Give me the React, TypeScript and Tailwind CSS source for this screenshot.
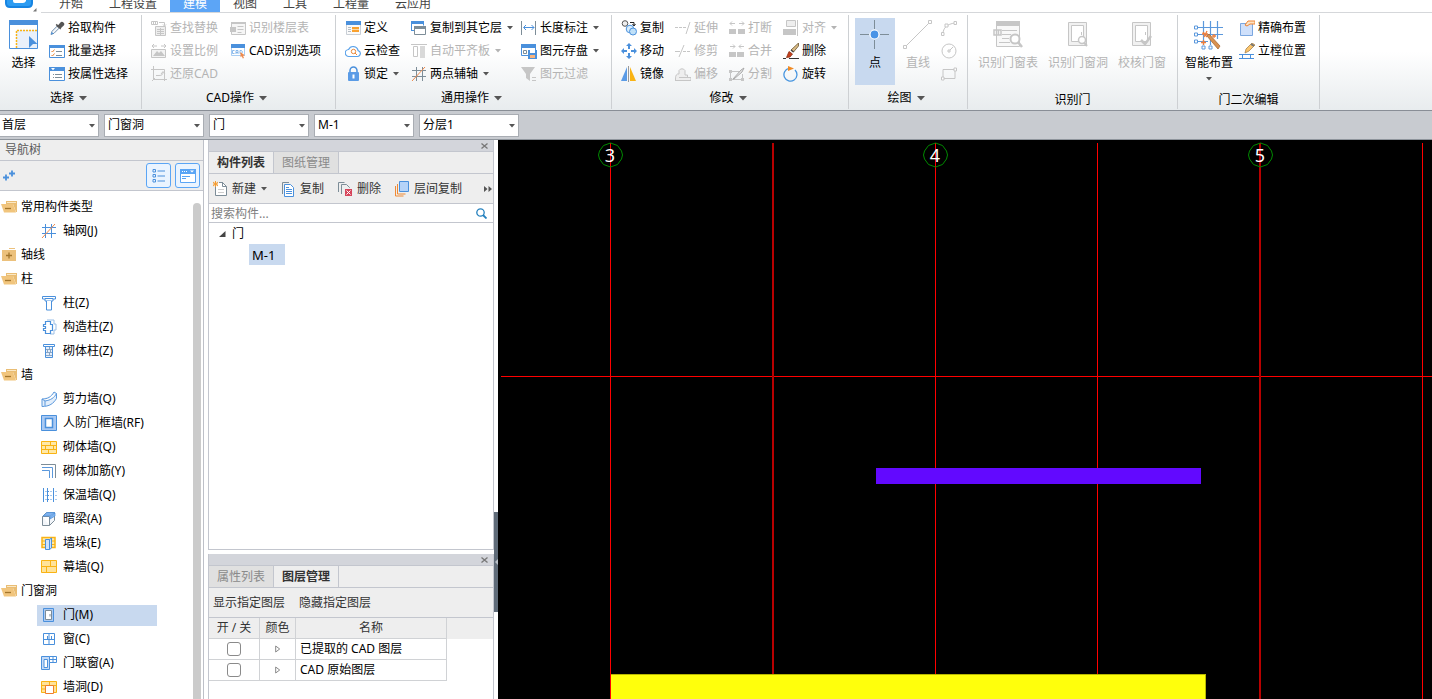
import type { ReactNode } from "react";
import clsx from "clsx";

const BLUE = "#4a90dc";
const SLATE = "#7d8d98";
const GRAY = "#c6c6c6";
const GOLD = "#f9b314";

const icons: Record<string, ReactNode> = {
  pick: (
    <>
      <path d="M2 14.5l1-3.2L8.6 5.7l2 2L5 13.3z" fill="#f4f6f8" stroke="#6f8fae" />
      <path d="M2 14.5l.8-2.6 1.8 1.7z" fill={BLUE} />
      <path d="M7.2 4.4l4.6 4.6M9 6.5l3-3.6c1-1.2 3.4.6 2.2 2.2L11 8z" fill="#555" stroke="#555" strokeWidth="1.5" />
    </>
  ),
  batch: (
    <>
      <path d="M.5 2.5h15v12H.5z" fill="#fff" stroke={BLUE} />
      <path d="M0 2h16v3H0z" fill={BLUE} />
      <path d="M2.5 8l1 1 2-2.500M2.5 12l1 1 2-2.500" fill="none" stroke="#e8873a" />
      <path d="M7 8.5h6M7 12.5h6" stroke={SLATE} />
    </>
  ),
  byAttr: (
    <>
      <path d="M.5 1.5h15v13H.5z" fill="#fff" stroke={BLUE} />
      <path d="M0 1h16v4H0z" fill={BLUE} />
      <path d="M2 2h4L4 4.2z" fill="#fff" />
      <path d="M4 8.5h1M4 11.5h1M6 8.5h7M6 11.5h7" stroke={SLATE} />
    </>
  ),
  findReplace: (
    <>
      <path d="M.5 1.5h6v3h-6zM2.5 2v2M4.5 2v2M8 2.5h5.5v3M12 4.5l1.5 1.5L15 4.5" fill="none" stroke={GRAY} />
      <path d="M4.5 6.5h10v9h-10z" fill="#eee" stroke={GRAY} />
      <path d="M6 9.5h7M6 11.5h7M6 13.5h7M9.5 8v7" stroke={GRAY} />
    </>
  ),
  scale: (
    <>
      <path d="M1 3h5M3 1L1 3l2 2M15 3h-5M13 1l2 2-2 2" fill="none" stroke={GRAY} />
      <path d="M.5 6.5h14v8H.5z" fill="#f3f3f3" stroke={GRAY} />
      <path d="M2 13l4-5 2 2 2-2 4 5z" fill={GRAY} />
    </>
  ),
  restore: (
    <path d="M2.5 0v13.5H16M0 3.5h13.5V15M1 15l3-3M5 9.5h3c3 0 4-1 4-3.5M10 8l2-2.5L14 8" fill="none" stroke={GRAY} />
  ),
  floorTable: (
    <>
      <path d="M1.5 2.5h14v12h-14z" fill="#f6f6f6" stroke={GRAY} />
      <path d="M1 2h15v2H1zM0 7h6v5H0z" fill={GRAY} />
      <path d="M7.5 6.5h6M7.5 9.5h6M7.5 12.5h4" stroke={GRAY} />
    </>
  ),
  cadOptions: (
    <>
      <path d="M1.5 2.5h13v10h-13z" fill="#fff" stroke="#a8cdf3" />
      <path d="M1 1h14v4H1z" fill={BLUE} />
      <path d="M4.5 7.5h-2v3h2M6 11V7.5h2V11M6 9.5h2M10 7.5h1.5l1 1.5-1 1.5H10z" fill="none" stroke="#6ea8e6" strokeWidth=".8" />
      <path d="M10.500 9l4.5 3.5-2 .3 1 2.2-1.2.5-1-2.2-1.3 1z" fill="#f08a4b" />
    </>
  ),
  define: (
    <>
      <path d="M1.5 1.5h14v13h-14z" fill="#fafafa" stroke="#c9cfd6" />
      <path d="M1 1h15v4H1z" fill={BLUE} />
      <path d="M3 7.5h3M3 9.5h3M3 11.5h3" stroke="#b5bcc3" />
      <path d="M7 7h7v5H7z" fill="#f9a12f" />
      <path d="M7 9.5h7" stroke="#fcd9a4" />
    </>
  ),
  cloudCheck: (
    <>
      <path d="M4 13.5h8.500a3 3 0 0 0 .6-5.900A5 5 0 0 0 3.600 6.500a3.500 3.500 0 0 0 .4 7z" fill="#fff" stroke="#5aa2ea" strokeWidth="1.2" />
      <circle cx="8.5" cy="8.5" r="2.2" fill="none" stroke="#e8873a" />
      <path d="M10 10l2 2" stroke="#e8873a" />
    </>
  ),
  lock: (
    <>
      <path d="M5 7V4.500a3.500 3.500 0 0 1 7 0V7" fill="none" stroke={BLUE} strokeWidth="1.5" />
      <rect x="3" y="6" width="11" height="9" rx="1" fill="#5a9be6" />
      <path d="M8.5 8.500v4" stroke="#fff" strokeWidth="2" />
    </>
  ),
  copyFloor: (
    <>
      <path d="M.5 10.5v-9h12v4" fill="#fff" stroke={BLUE} />
      <path d="M0 1h13v3H0zM0 10h3v1H0z" fill={BLUE} />
      <path d="M3.5 6.5h11v8h-11z" fill="#fff" stroke={SLATE} />
      <path d="M3 6h12v3H3z" fill={SLATE} />
    </>
  ),
  alignSlab: (
    <>
      <path d="M0 1.5h16" stroke={GRAY} />
      <path d="M2.5 3.5h4v10h-4z" fill="#fff" stroke={GRAY} />
      <path d="M9 3h5v12H9z" fill="#d9d9d9" />
    </>
  ),
  twoPoint: (
    <>
      <path d="M5.5 1v14M11.5 1v14M1 4.5h14M1 10.5h14" stroke={SLATE} />
      <path d="M1 15L14 1" stroke="#f08a4b" />
    </>
  ),
  dimension: (
    <>
      <path d="M.5 1v14M14.5 1v14" stroke={SLATE} />
      <path d="M3 7.5h10M5 5L2.5 7.5 5 10M10.5 5L13 7.5 10.5 10" fill="none" stroke={BLUE} />
    </>
  ),
  saveElement: (
    <>
      <path d="M.5 1.5h14v11H.5z" fill="#fff" stroke={BLUE} />
      <path d="M0 1h15v4H0z" fill={BLUE} />
      <path d="M2.5 7.5h3v3h-3z" fill="none" stroke={SLATE} />
      <path d="M7 7h9v9H7z" fill={BLUE} />
      <path d="M9 7h5v3H9z" fill="#fff" />
      <path d="M9 12h5v3H9z" fill="#f7b37d" />
    </>
  ),
  filter: (
    <>
      <path d="M0 1h14L9 8v7l-4-3V8z" fill={GRAY} />
      <path d="M11 11.5h4M11 14.5h4" stroke={GRAY} />
    </>
  ),
  copy: (
    <>
      <circle cx="4" cy="3.5" r="2.8" fill="#eee" stroke="#555" />
      <circle cx="9" cy="9" r="3.8" fill="#d8edfb" stroke={BLUE} />
      <circle cx="12" cy="11.5" r="3.5" fill="#bfe0f8" stroke={BLUE} />
      <path d="M9 2.5h4v3M11.5 4L13 6l1.5-2" fill="none" stroke="#222" />
    </>
  ),
  move: (
    <path
      d="M8 0l3 3H9v3H7V3H5zM8 16l3-3H9v-3H7v3H5zM0 8l3-3v2h3v2H3v2zM16 8l-3-3v2h-3v2h3v2z"
      fill={BLUE}
    />
  ),
  mirror: (
    <>
      <path d="M0 15h6V1z" fill="#5a9be6" />
      <path d="M7.5 0v16" stroke="#999" />
      <path d="M15 15H9V1z" fill={GOLD} />
    </>
  ),
  extend: <path d="M0 7.5h3M4 7.5h3M8 7.5h3M11 14L15 2" fill="none" stroke={GRAY} />,
  trim: <path d="M0 8.5h5M4 14L9 2M8 8.5h3M12 8.5h3" fill="none" stroke={GRAY} />,
  offset: (
    <>
      <path d="M0 14.5h16v-3h-3.500V9H10V4.500a3.500 3.500 0 0 0-6 0V8H2.500c-2 1-2 3-2 6z" fill="#eee" stroke={GRAY} />
      <path d="M4 11.5h9" stroke={GRAY} />
    </>
  ),
  breakIcon: (
    <>
      <path d="M0 9h7v5H0zM9 9h7v5H9z" fill={GRAY} />
      <path d="M1 3.5h5M3 1.5l-2 2 2 2M15 3.5h-5M13 1.5l2 2-2 2" fill="none" stroke={GRAY} />
    </>
  ),
  merge: (
    <>
      <path d="M0 9h7v5H0zM8 9h7v5H8z" fill={GRAY} />
      <path d="M1 3.5h5M4 1.5l2 2-2 2M15 3.5h-5M12 1.5l-2 2 2 2" fill="none" stroke={GRAY} />
    </>
  ),
  split: (
    <>
      <path d="M10 5.5H1.5v8h12V8" fill="none" stroke={GRAY} />
      <path d="M0 4h3v3H0zM0 12h3v3H0zM12 12h3v3h-3z" fill={GRAY} />
      <path d="M4 13l8-9 3-2-2 4-8 7z" fill="#e5e5e5" stroke="#aaa" />
    </>
  ),
  align: (
    <>
      <path d="M3.5.5h9v6h-9z" fill="#eee" stroke={GRAY} />
      <path d="M0 9h13v6H0z" fill={GRAY} />
      <path d="M14.5 0v16" stroke={GRAY} />
    </>
  ),
  erase: (
    <>
      <path d="M15.5 0v3l-5 6-2.500-2z" fill="#d9bb85" stroke="#6b5430" strokeWidth=".8" />
      <path d="M8 7l2.500 2" stroke="#444" strokeWidth="1.500" />
      <path d="M6 8.500l3.500 2.500-2.500 3-3.500.500z" fill="#c7401c" stroke="#8a3015" strokeWidth=".8" />
      <path d="M0 15.5h3M6 15.5h10" stroke="#333" />
    </>
  ),
  rotate: (
    <>
      <path d="M6 2.300A6.500 6.500 0 1 0 12 4" fill="none" stroke="#4795df" strokeWidth="1.3" />
      <path d="M5 0l6 2.5L5 5z" fill="#f08a24" />
    </>
  ),
  precise: (
    <>
      <path d="M1.5 3.5h12v12h-12z" fill="#cfe0fb" stroke="#7ba7e0" />
      <path d="M6 5l3-4h7v3h-5l-3 2z" fill="#fde3c4" stroke="#ee8434" />
    </>
  ),
  frame: (
    <>
      <path d="M6 10l1-4 6-6 3 2-6 6z" fill="#fbc56d" stroke="#a8844d" strokeWidth=".8" />
      <path d="M12 1l3 2" stroke="#777" strokeWidth="2" />
      <path d="M0 11.5h15M0 15.5h15M3.5 11v5M11.5 11v5" stroke={BLUE} />
    </>
  ),
  newItem: (
    <>
      <path d="M2.5 6v8.5h11v-9l-4-4H6" fill="#fff" stroke={SLATE} />
      <path d="M9.5 1v4.5h4" fill="none" stroke={SLATE} />
      <path d="M5 8.5h6M5 11.5h6" stroke="#ccc" />
      <path d="M0 1l5 4M5 1L0 5M2.5 0v6M0 3h5" stroke="#f59b2d" />
    </>
  ),
  copyDoc: (
    <>
      <path d="M1.5 13V1.5H8" fill="none" stroke={SLATE} />
      <path d="M3.5 3.5h6l3 3v9h-9z" fill="#fff" stroke={BLUE} />
      <path d="M5 8.5h6M5 10.5h6M5 12.5h6M5 6.5h3" stroke={BLUE} />
    </>
  ),
  deleteDoc: (
    <>
      <path d="M.5 11V1.5h6M3.5 13V3.5h5l3 3V7" fill="none" stroke={SLATE} />
      <path d="M7 8h7v7H7z" fill="#d6455b" />
      <path d="M8.5 9.5l4 4M12.5 9.5l-4 4" stroke="#fff" />
    </>
  ),
  layerCopy: (
    <>
      <path d="M.5 5v10h8M2.5 3v10h8" fill="none" stroke="#ef8a35" />
      <path d="M4.5.5h9v10h-9z" fill="#b5d3f8" stroke={BLUE} />
    </>
  ),
  folderOpen: (
    <>
      <path d="M5 2h11v11h-1l-3-8H5z" fill="#e9bd74" />
      <path d="M6 3.5h9" stroke="#fbe8c4" />
      <path d="M0 5h12l3 8.500H3z" fill="#f1c57d" />
      <path d="M4 9.500h6" stroke="#a3762c" strokeWidth="1.3" />
    </>
  ),
  folderClosed: (
    <>
      <path d="M8 1h6v1H8zM1 3h14v11H1z" fill="#ecc17c" />
      <path d="M5 8.500h6M8 5.500v6" stroke="#a3762c" strokeWidth="1.3" />
    </>
  ),
  grid: (
    <>
      <path d="M4.5 1v14M10.5 1v14M1 4.5h14M1 10.5h14" stroke={BLUE} />
      <path d="M1 15L14 1" stroke="#f08a4b" />
    </>
  ),
  column: (
    <>
      <path d="M1.5 1.500h13v2.500h-2.500v2h-8v-2h-2.500z" fill="#fff" stroke={BLUE} />
      <path d="M4 3.500h8" stroke={BLUE} />
      <path d="M5.5 6v9h5V6" fill="#fff" stroke={BLUE} />
    </>
  ),
  tieColumn: (
    <>
      <path d="M6 1h7v4h2v6h-2v4H9" fill="none" stroke="#9bbfe6" />
      <path d="M4.5 2.5h5v3h2v6h-2v3h-5v-3h-2v-2h2v-2h-2v-2h2z" fill="#fff" stroke={BLUE} strokeWidth="1.2" />
    </>
  ),
  brickColumn: (
    <>
      <path d="M2.5 1.500h11v2h-11z" fill="#fff" stroke={BLUE} />
      <path d="M4.5 3.500v11h7v-11z" fill="#e6effa" stroke={BLUE} />
      <path d="M5 6.5h6M5 9.5h6M5 12.5h6M8.5 4v2M6.5 7v2M9.500 7v2M8.5 10v2" stroke="#8aa5c4" />
    </>
  ),
  shearWall: (
    <path d="M1 8c6 0 9-2 12-7l2.5 1.5v5c-3 5-7 8-14.500 8zM1 8l3 2c6-1 9-3 11.500-7.500M4 10v5" fill="#e2eefb" stroke="#5b98dc" />
  ),
  airDefence: (
    <>
      <path d="M.5.5h15v15H.5z" fill="#a9c9f3" stroke={BLUE} />
      <path d="M4.5 3.5h7v9h-7z" fill="#fff" stroke={BLUE} strokeWidth="1.5" />
    </>
  ),
  brickWall: (
    <>
      <path d="M.5 2.5h15v12H.5z" fill="#ffe9a8" stroke={GOLD} />
      <path d="M0 6.5h16M0 10.5h16M9.5 2v4M4.5 6v4M12.5 6v4M7.5 10v4" stroke={GOLD} />
    </>
  ),
  wallRebar: (
    <>
      <path d="M0 1.5h14.500V15" fill="none" stroke={SLATE} />
      <path d="M1 4.5h10.500V15M1 7.5h7.500V15" fill="none" stroke="#5b98dc" />
    </>
  ),
  insulation: (
    <>
      <path d="M2.5 1v14M6.5 1v14M12.5 1v14" stroke={BLUE} />
      <path d="M2 4.5h14M2 8.5h14M2 12.5h14" stroke={BLUE} strokeDasharray="1 1.5" />
    </>
  ),
  hiddenBeam: (
    <>
      <path d="M1.5 5.5h7v9h-7zM8.5 14.500l5-5v-8h-8l-4 4" fill="#f3f6fa" stroke={SLATE} />
      <path d="M2 5l4-3.5h8L9 5zM9 6l5-4v3L9 8z" fill="#7fb2ee" stroke={BLUE} strokeWidth=".7" />
    </>
  ),
  wallPier: (
    <>
      <path d="M1 2.5h13v10H1z" fill="#ffe9a8" stroke={GOLD} strokeWidth="1.5" />
      <path d="M1 6h13M1 9.5h13" stroke={GOLD} />
      <path d="M4.5 4.5h4v10h-4zM8.5 4.5l2-1.500v10l-2 1.500" fill="#cfe2fa" stroke={BLUE} />
    </>
  ),
  curtainWall: (
    <>
      <path d="M.5 1.5h15v12H.5z" fill="#ffe39a" stroke={GOLD} />
      <path d="M0 7.5h16M9.5 2v5M5.5 8v5" stroke={GOLD} />
    </>
  ),
  door: (
    <>
      <path d="M2.5 1.5h10v13h-10z" fill="#a9c9f3" stroke={BLUE} />
      <path d="M4.5 3.5h6v9h-6z" fill="#fff" stroke={SLATE} />
      <path d="M9 7v2.500" stroke={SLATE} />
    </>
  ),
  window: <path d="M2.5 2.5h11v11h-11zM8 2.5v11M2.5 8.5h11M6.5 5v3M10.5 5v3" fill="#fff" stroke={BLUE} />,
  doorWindow: (
    <>
      <path d="M.5 1.5h8v13h-8z" fill="#c5dbf7" stroke={BLUE} />
      <path d="M3 4.5h3.500v8H3z" fill="#fff" stroke={BLUE} />
      <path d="M8.5 1.5h7v6h-7zM12 1.5v6M8.5 4.5h7" fill="#fff" stroke={BLUE} />
    </>
  ),
  wallHole: (
    <>
      <path d="M.5 2.5h15v11H.5z" fill="#ffe39a" stroke={GOLD} />
      <path d="M0 6.5h16M8.5 2v4M0 10h5" stroke={GOLD} />
      <path d="M4.5 6.5h8v8h-8z" fill="#fff" stroke="#ef7f2d" />
    </>
  ),
  arc: (
    <>
      <path d="M2 14c0-6 4-10 12-11" fill="none" stroke={GRAY} />
      <path d="M.5 12.5h2.500v3H.5zM4 4h3v3H4zM13 1.5h2.500v3H13z" fill="#fff" stroke={GRAY} />
    </>
  ),
  circle: (
    <>
      <circle cx="8" cy="8" r="7" fill="none" stroke={GRAY} />
      <path d="M7 7h2v2H7zM9 7l3-3" fill="none" stroke={GRAY} />
    </>
  ),
  rect: (
    <>
      <path d="M2 3.5h12v9H2z" fill="none" stroke={GRAY} />
      <path d="M.5 11h2.500v3H.5zM13 2h2.500v3H13z" fill="#fff" stroke={GRAY} />
    </>
  ),
  bigSelect: (
    <>
      <path d="M.5.5h28v28H.5z" fill="#e9f0fa" stroke={BLUE} />
      <path d="M0 0h29v5H0z" fill={BLUE} />
      <path d="M1 5h27v5H7v18H1z" fill="#fff" />
      <path d="M7.5 28V10.5H28" fill="none" stroke={GOLD} strokeWidth="1.5" strokeDasharray="2 1" />
      <path d="M20 16l8.500 8H24l-4 4z" fill={BLUE} />
    </>
  ),
  bigPoint: (
    <>
      <path d="M14.5 0v9M14.5 20v9M0 14.5h9M20 14.5h9" stroke={SLATE} />
      <circle cx="14.5" cy="14.5" r="4.5" fill="#4a94e6" stroke="#fff" strokeWidth="1.2" />
    </>
  ),
  bigLine: (
    <>
      <path d="M2 27L27 2" stroke={GRAY} />
      <path d="M.5 25.5h3v3h-3zM25.5.5h3v3h-3z" fill="#fff" stroke={GRAY} />
    </>
  ),
  bigDoorTable: (
    <>
      <path d="M3.5 1.5h23v25h-23z" fill="#f8f8f8" stroke={GRAY} />
      <path d="M3 1h24v5H3z" fill={GRAY} />
      <path d="M9 10.5h15M9 14.5h9M9 18.5h7M6 22.5h11" stroke={GRAY} />
      <path d="M1 10h7v5H1zM3.5 10v5M5.5 10v5" fill="#fff" stroke={GRAY} strokeWidth="1.5" />
      <circle cx="22" cy="19" r="4.5" fill="#fff" stroke={GRAY} strokeWidth="2" />
      <path d="M25 22l4 5" stroke={GRAY} strokeWidth="2.5" />
    </>
  ),
  bigDoorHole: (
    <>
      <path d="M5.5 2.5h18v23h-18z" fill="#f1f1f1" stroke={GRAY} />
      <path d="M8.5 5.5h12v16h-12z" fill="#fff" stroke={GRAY} />
      <path d="M18.5 12v3" stroke={GRAY} />
      <circle cx="19" cy="20" r="3.5" fill="#fff" stroke={GRAY} strokeWidth="1.5" />
      <path d="M21 22.5l3 3.500" stroke={GRAY} strokeWidth="2" />
    </>
  ),
  bigDoorCheck: (
    <>
      <path d="M5.5 2.5h18v23h-18z" fill="#f1f1f1" stroke={GRAY} />
      <path d="M8.5 5.5h12v16h-12z" fill="#fff" stroke={GRAY} />
      <path d="M18.5 12v3" stroke={GRAY} />
      <path d="M14 20l4 4 6-8" fill="none" stroke={GRAY} strokeWidth="2.5" />
    </>
  ),
  bigSmart: (
    <>
      <path d="M9.5 1v24M16.5 1v24M23.5 1v18M2 7.5h27M2 14.5h27M2 21.5h12" stroke="#5b98dc" strokeWidth="1.2" />
      <path d="M.5 6h3v3h-3zM.5 13h3v3h-3zM.5 20h3v3h-3zM8 26h3v3H8zM15 26h3v3h-3z" fill="#fff" stroke="#5b98dc" />
      <path d="M13 16l2-2 11 12-2 3z" fill="#d99150" stroke="#a86a35" strokeWidth=".8" />
      <path d="M9 12l4 5M13 11l-3 6M8 14h6M20 14v4M18 16h4M9.500 20v5M7 22.5h5" stroke="#ee7f3d" strokeWidth="1.3" />
    </>
  ),
};

function Icon({ name, size = 16 }: { name: string; size?: 16 | 30 }) {
  return (
    <svg
      viewBox={size === 16 ? "0 0 16 16" : "0 0 30 30"}
      width={size}
      height={size}
      className="shrink-0"
      aria-hidden="true"
    >
      {icons[name]}
    </svg>
  );
}

function Caret({ className }: { className?: string }) {
  return (
    <svg viewBox="0 0 6 4" className={clsx("h-1 w-1.5 shrink-0", className)} aria-hidden="true">
      <path d="M0 0h6L3 3.5z" fill="currentColor" />
    </svg>
  );
}

type ToolProps = { icon: string; label: string; menu?: boolean; disabled?: boolean };

function Tool({ icon, label, menu, disabled }: ToolProps) {
  return (
    <button
      type="button"
      disabled={disabled}
      className="flex h-[23px] items-center gap-[3px] whitespace-nowrap disabled:text-[#b4b4b4]"
    >
      <Icon name={icon} />
      <span>{label}</span>
      {menu && <Caret className={clsx("ml-0.5", !disabled && "text-[#555]")} />}
    </button>
  );
}

function BigTool({ icon, label, menu, disabled, active }: ToolProps & { active?: boolean }) {
  return (
    <button
      type="button"
      disabled={disabled}
      className={clsx(
        "mt-0.5 flex h-[67px] flex-col items-center whitespace-nowrap pt-0.5 disabled:text-[#b4b4b4]",
        active && "w-10 bg-[#c8d9ef]"
      )}
    >
      <Icon name={icon} size={30} />
      <span className="mt-[5px]">{label}</span>
      {menu && <Caret className="mt-1.5 text-[#555]" />}
    </button>
  );
}

function Group({
  title,
  menu,
  className,
  children,
}: {
  title: string;
  menu?: boolean;
  className: string;
  children: ReactNode;
}) {
  return (
    <section className={clsx("mb-px mt-0.5 flex shrink-0 flex-col border-r border-[#cdd0d3]", className)}>
      <div className="flex h-[70px] pt-px">{children}</div>
      <div className={clsx("flex h-6 items-center justify-center gap-[5px]", menu ? "pr-1 pt-0.5" : "pt-1.5")}>
        {title}
        {menu && (
          <svg viewBox="0 0 8 5" className="h-[5px] w-2" aria-hidden="true">
            <path d="M0 0h8L4 4.5z" fill="#555" />
          </svg>
        )}
      </div>
    </section>
  );
}

const tabs = ["开始", "工程设置", "建模", "视图", "工具", "工程量", "云应用"];

function TitleTabs() {
  return (
    <header className="flex h-[13px] shrink-0 items-end overflow-hidden bg-white">
      <div className="flex h-[13px] w-[41px] shrink-0 pl-[5px]">
        <svg viewBox="0 0 34 13" className="h-[13px] w-[34px]" aria-hidden="true">
          <path d="M0-8h28v11q0 5-5 5H5q-5 0-5-5z" fill="#1684e2" />
          <path d="M2-1h24v4q0 3-3 3H5q-3 0-3-3z" fill="#2c9cf2" />
          <path d="M8-2h5v2l1.500-1.500L16 0v-2h5v3q-1 2-3 2h-8q-2 0-2-2z" fill="#fff" />
          <path d="M31.5 8v3.500H28z" fill="#777" />
        </svg>
      </div>
      <nav className="flex h-[18px] flex-1 border-b border-[#d5d7da] pl-[5px] text-[#444]">
        {tabs.map((tab) => (
          <a
            key={tab}
            href="#"
            className={clsx("flex h-[17px] items-center px-[13px]", tab === "建模" && "bg-[#5ca5f6] text-white")}
          >
            {tab}
          </a>
        ))}
      </nav>
    </header>
  );
}

function Ribbon() {
  return (
    <div className="flex shrink-0 overflow-hidden border-b border-[#898e96] bg-linear-to-b from-white from-40% to-[#e8ecee]">
      <Group title="选择" menu className="w-[142px]">
        <div className="flex w-[49px] justify-center pr-0.5">
          <BigTool icon="bigSelect" label="选择" />
        </div>
        <div>
          <Tool icon="pick" label="拾取构件" />
          <Tool icon="batch" label="批量选择" />
          <Tool icon="byAttr" label="按属性选择" />
        </div>
      </Group>
      <Group title="CAD操作" menu className="w-[194px]">
        <div className="w-[88px] pl-[9px]">
          <Tool icon="findReplace" label="查找替换" disabled />
          <Tool icon="scale" label="设置比例" disabled />
          <Tool icon="restore" label="还原CAD" disabled />
        </div>
        <div>
          <Tool icon="floorTable" label="识别楼层表" disabled />
          <Tool icon="cadOptions" label="CAD识别选项" />
        </div>
      </Group>
      <Group title="通用操作" menu className="w-[276px]">
        <div className="w-[75px] pl-[9px]">
          <Tool icon="define" label="定义" />
          <Tool icon="cloudCheck" label="云检查" />
          <Tool icon="lock" label="锁定" menu />
        </div>
        <div className="w-[110px]">
          <Tool icon="copyFloor" label="复制到其它层" menu />
          <Tool icon="alignSlab" label="自动平齐板" menu disabled />
          <Tool icon="twoPoint" label="两点辅轴" menu />
        </div>
        <div>
          <Tool icon="dimension" label="长度标注" menu />
          <Tool icon="saveElement" label="图元存盘" menu />
          <Tool icon="filter" label="图元过滤" disabled />
        </div>
      </Group>
      <Group title="修改" menu className="w-[237px]">
        <div className="w-[63px] pl-[9px]">
          <Tool icon="copy" label="复制" />
          <Tool icon="move" label="移动" />
          <Tool icon="mirror" label="镜像" />
        </div>
        <div className="w-[54px]">
          <Tool icon="extend" label="延伸" disabled />
          <Tool icon="trim" label="修剪" disabled />
          <Tool icon="offset" label="偏移" disabled />
        </div>
        <div className="w-[54px]">
          <Tool icon="breakIcon" label="打断" disabled />
          <Tool icon="merge" label="合并" disabled />
          <Tool icon="split" label="分割" disabled />
        </div>
        <div>
          <Tool icon="align" label="对齐" menu disabled />
          <Tool icon="erase" label="删除" />
          <Tool icon="rotate" label="旋转" />
        </div>
      </Group>
      <Group title="绘图" menu className="w-[119px]">
        <div className="flex gap-2 pl-1.5">
          <BigTool icon="bigPoint" label="点" active />
          <BigTool icon="bigLine" label="直线" disabled />
          <div className="flex flex-col">
            {[
              ["arc", "弧线"],
              ["circle", "圆"],
              ["rect", "矩形"],
            ].map(([icon, label]) => (
              <button key={icon} type="button" disabled aria-label={label} className="flex h-[23px] items-center">
                <Icon name={icon} />
              </button>
            ))}
          </div>
        </div>
      </Group>
      <Group title="识别门" className="w-[210px]">
        <div className="flex gap-2.5 pl-2.5">
          <BigTool icon="bigDoorTable" label="识别门窗表" disabled />
          <BigTool icon="bigDoorHole" label="识别门窗洞" disabled />
          <BigTool icon="bigDoorCheck" label="校核门窗" disabled />
        </div>
      </Group>
      <Group title="门二次编辑" className="w-[142px]">
        <div className="flex gap-1.5 pl-[7px]">
          <BigTool icon="bigSmart" label="智能布置" menu />
          <div>
            <Tool icon="precise" label="精确布置" />
            <Tool icon="frame" label="立樘位置" />
          </div>
        </div>
      </Group>
    </div>
  );
}

const selectors = [
  { label: "楼层", value: "首层" },
  { label: "构件分类", value: "门窗洞" },
  { label: "构件类型", value: "门" },
  { label: "构件", value: "M-1" },
  { label: "分层", value: "分层1" },
];

function SelectorBar() {
  return (
    <div className="flex h-[29px] shrink-0 items-center gap-[5px] border-b border-[#8f959c] bg-[#c8cbd0]">
      {selectors.map(({ label, value }, i) => (
        <label key={label} className={clsx("relative flex", i === 0 ? "w-[99px]" : "w-[100px]")}>
          <select
            aria-label={label}
            className={clsx(
              "h-[23px] w-full appearance-none border border-[#a9adb3] bg-white",
              i === 0 ? "border-l-0 pl-0.5" : "pl-[3px]"
            )}
          >
            <option>{value}</option>
          </select>
          <Caret className="pointer-events-none absolute right-1 top-2.5 text-[#555]" />
        </label>
      ))}
    </div>
  );
}

const tree = [
  {
    name: "常用构件类型",
    open: true,
    items: [["grid", "轴网(J)"]],
  },
  { name: "轴线", open: false, items: [] },
  {
    name: "柱",
    open: true,
    items: [
      ["column", "柱(Z)"],
      ["tieColumn", "构造柱(Z)"],
      ["brickColumn", "砌体柱(Z)"],
    ],
  },
  {
    name: "墙",
    open: true,
    items: [
      ["shearWall", "剪力墙(Q)"],
      ["airDefence", "人防门框墙(RF)"],
      ["brickWall", "砌体墙(Q)"],
      ["wallRebar", "砌体加筋(Y)"],
      ["insulation", "保温墙(Q)"],
      ["hiddenBeam", "暗梁(A)"],
      ["wallPier", "墙垛(E)"],
      ["curtainWall", "幕墙(Q)"],
    ],
  },
  {
    name: "门窗洞",
    open: true,
    items: [
      ["door", "门(M)"],
      ["window", "窗(C)"],
      ["doorWindow", "门联窗(A)"],
      ["wallHole", "墙洞(D)"],
    ],
  },
];

function NavTree() {
  return (
    <aside className="flex w-[204px] shrink-0 flex-col border-r border-[#bdc0c8] bg-white">
      <h2 className="flex h-[21px] shrink-0 items-center border-b border-[#c3c6ce] bg-[#eee] pl-[5px] text-[#5a5a5a]">
        导航树
      </h2>
      <div className="flex h-[30px] shrink-0 items-center border-b border-[#c3c6ce] bg-[#eee] pl-[3px] pr-[3px]">
        <button type="button" aria-label="展开全部">
          <svg viewBox="0 0 12 12" className="size-3" aria-hidden="true">
            <path d="M0 7.5h6M3 4.5v6M6 3.5h6M9 .5v6" stroke={BLUE} strokeWidth="1.8" />
          </svg>
        </button>
        <button
          type="button"
          aria-label="列表视图"
          className="ml-auto flex size-[25px] items-center justify-center rounded-[3px] border border-[#5aa5f5] bg-[#eaf4ff]"
        >
          <svg viewBox="0 0 14 14" className="size-3.5" aria-hidden="true">
            <path d="M1 .5h2.500V3H1zM1 5.5h2.500V8H1zM1 10.5h2.500V13H1zM5.5 2H13M5.5 7H13M5.5 12H13" fill="none" stroke={BLUE} />
          </svg>
        </button>
        <button
          type="button"
          aria-label="面板视图"
          className="ml-1 flex size-[25px] items-center justify-center rounded-[3px] border border-[#5aa5f5] bg-[#eaf4ff]"
        >
          <svg viewBox="0 0 16 14" className="h-3.5 w-4" aria-hidden="true">
            <path d="M.5.5h15v13H.5z" fill="#fff" stroke="#5aa5f5" />
            <path d="M0 0h16v5H0z" fill="#5aa5f5" />
            <path d="M2 2.5h1M4 2.5h1M6 2.5h1" stroke="#fff" />
            <path d="M10 1.5h4l-2 2z" fill="#fff" />
            <path d="M2 7.5h8M2 9.5h4" stroke="#5aa5f5" />
          </svg>
        </button>
      </div>
      <div className="flex min-h-0 flex-1 overflow-hidden">
        <ul className="flex-1 pt-1">
          {tree.map((folder) => (
            <li key={folder.name}>
              <div className="flex h-6 items-center gap-1 pl-px">
                <Icon name={folder.open ? "folderOpen" : "folderClosed"} />
                {folder.name}
              </div>
              <ul>
                {folder.items.map(([icon, label]) => (
                  <li key={label} className="flex h-6 items-center pl-[37px]">
                    <a
                      href="#"
                      className={clsx(
                        "flex h-[21px] w-[120px] items-center gap-1.5 whitespace-nowrap pl-1",
                        label === "门(M)" && "bg-[#c8d9ef]"
                      )}
                    >
                      <Icon name={icon} />
                      {label}
                    </a>
                  </li>
                ))}
              </ul>
            </li>
          ))}
        </ul>
        <div className="mr-0.5 mt-3 w-2 rounded-t-full bg-[#cbcbcb]" />
      </div>
    </aside>
  );
}

function PanelHeader({ items, active }: { items: string[]; active: string }) {
  return (
    <>
      <div className="flex h-3 shrink-0 items-center justify-end border-b border-[#c3c6ce] bg-[#d3d5db] pr-[5px]">
        <button type="button" aria-label="关闭">
          <svg viewBox="0 0 7 6" className="h-1.5 w-[7px]" aria-hidden="true">
            <path d="M.5.5l6 5M6.5.5l-6 5" stroke="#777" strokeWidth="1.3" />
          </svg>
        </button>
      </div>
      <div className="flex h-[22px] shrink-0 border-b border-[#c3c6ce] bg-[#eee]">
        {items.map((item) => (
          <button
            key={item}
            type="button"
            className={clsx(
              "w-[65px] border-r border-[#c3c6ce]",
              item === active ? "font-bold text-[#333]" : "bg-[#e0e0e0] text-[#8a8a8a]"
            )}
          >
            {item}
          </button>
        ))}
      </div>
    </>
  );
}

const layers = ["已提取的 CAD 图层", "CAD 原始图层"];

function SidePanels() {
  return (
    <div className="ml-1 flex w-[286px] shrink-0 flex-col gap-1 text-[#333]">
      <section className="flex h-[410px] shrink-0 flex-col border-x border-b border-[#c3c6ce] bg-white">
        <PanelHeader items={["构件列表", "图纸管理"]} active="构件列表" />
        <div className="flex h-[30px] shrink-0 items-center border-b border-[#c3c6ce] bg-[#eee] pl-1">
          <div className="flex items-center gap-3.5">
            <Tool icon="newItem" label="新建" menu />
            <Tool icon="copyDoc" label="复制" />
            <Tool icon="deleteDoc" label="删除" />
            <Tool icon="layerCopy" label="层间复制" />
          </div>
          <button type="button" aria-label="更多" className="ml-auto pr-px">
            <svg viewBox="0 0 8 6" className="h-1.5 w-2" aria-hidden="true">
              <path d="M0 0l3.500 3L0 6zM4.5 0L8 3 4.5 6z" fill="#555" />
            </svg>
          </button>
        </div>
        <div className="flex h-[19px] shrink-0 items-center border-b border-[#c3c6ce] pl-0.5 pr-1.5">
          <input
            aria-label="搜索构件"
            placeholder="搜索构件..."
            className="h-[18px] min-w-0 flex-1 outline-none placeholder:text-[#808080]"
          />
          <svg viewBox="0 0 11 11" className="size-[11px]" aria-hidden="true">
            <circle cx="4.5" cy="4.5" r="3.7" fill="none" stroke="#2581be" strokeWidth="1.3" />
            <path d="M7 7l3.500 3.500" stroke="#2581be" strokeWidth="1.8" />
          </svg>
        </div>
        <div className="flex h-[21px] items-center gap-1.5 pl-[9px] text-black">
          <svg viewBox="0 0 8 8" className="size-2" aria-hidden="true">
            <path d="M7.5 1v6H1z" fill="#444" />
          </svg>
          门
        </div>
        <a href="#" className="ml-10 flex h-[21px] w-9 items-center bg-[#c8d9ef] pl-[3px] text-[13px] text-black">
          M-1
        </a>
      </section>

      <section className="flex flex-1 flex-col overflow-hidden border-x border-[#c3c6ce] bg-white">
        <PanelHeader items={["属性列表", "图层管理"]} active="图层管理" />
        <div className="flex h-[30px] shrink-0 items-center gap-3.5 border-b border-[#c3c6ce] bg-[#eee] pl-1">
          <button type="button">显示指定图层</button>
          <button type="button">隐藏指定图层</button>
        </div>
        <table className="w-full table-fixed border-separate border-spacing-0">
          <thead>
            <tr className="h-[21px] bg-[#eee] *:border-b *:border-r *:border-[#d0d2d5] *:p-0 *:font-normal">
              <th className="w-[51px]">开 / 关</th>
              <th className="w-9">颜色</th>
              <th className="w-[151px]">名称</th>
              <td className="border-r-0! border-b-0!" />
            </tr>
          </thead>
          <tbody>
            {layers.map((layer) => (
              <tr key={layer} className="h-[21px]">
                <td className="border-b border-r border-[#d0d2d5] p-0">
                  <input
                    type="checkbox"
                    aria-label={layer}
                    className="mx-auto block size-3.5 appearance-none rounded-[3px] border border-[#8a8a8a] bg-white checked:bg-[#4a90dc]"
                  />
                </td>
                <td className="border-b border-r border-[#d0d2d5] p-0">
                  <svg viewBox="0 0 6 8" className="mx-auto block h-2 w-1.5" aria-hidden="true">
                    <path d="M.7 1l4 3-4 3z" fill="#fff" stroke="#888" />
                  </svg>
                </td>
                <td className="border-b border-r border-[#d0d2d5] py-0 pl-1 pr-0 text-black">{layer}</td>
                <td />
              </tr>
            ))}
          </tbody>
        </table>
      </section>
    </div>
  );
}

const axes = [
  { x: 112, name: "3" },
  { x: 437, name: "4" },
  { x: 762, name: "5" },
];

function Drawing() {
  return (
    <svg className="h-full min-w-0 flex-1 bg-black" role="img" aria-label="平面图">
      <g shapeRendering="crispEdges">
        <path d="M3 236.5h3000" stroke="#f00" />
        <path d="M112.5 3v3000M437.5 3v531M599.5 3v531M924.5 3v3000" stroke="#f00" />
        <path d="M275 3v531M762 3v3000" stroke="#b80000" strokeWidth="2" />
        <rect x="378" y="328" width="325" height="16" fill="#6209ff" />
        <rect x="113" y="534" width="595" height="3000" fill="#ffff0c" />
        <path d="M113 534.5h594.500v3000" fill="none" stroke="#b8b800" />
      </g>
      {axes.map(({ x, name }) => (
        <g key={name}>
          <path
            d="M0-12l7 2.500 4 5.500 1 4-1 4-4 5.500-7 2.500-7-2.500-4-5.500-1-4 1-4 4-5.500z"
            transform={`translate(${x + 0.5} 15)`}
            fill="none"
            stroke="#008a00"
          />
          <text x={x} y="22" textAnchor="middle" fontSize="18" fill="#fff">
            {name}
          </text>
        </g>
      ))}
    </svg>
  );
}

export default function App() {
  return (
    <div className="flex h-screen flex-col overflow-hidden bg-white font-['Noto_Sans','Noto_Sans_CJK_SC',sans-serif] text-[12px] leading-4 text-black">
      <TitleTabs />
      <Ribbon />
      <SelectorBar />
      <main className="flex min-h-0 flex-1 overflow-hidden">
        <NavTree />
        <SidePanels />
        <div className="w-1 shrink-0 bg-white">
          <button
            type="button"
            aria-label="收起面板"
            className="mt-[372px] flex h-[100px] w-full items-center justify-end bg-[#5f6b78]"
          >
            <svg viewBox="0 0 3 6" className="h-1.5 w-[3px]" aria-hidden="true">
              <path d="M3 0v6L0 3z" fill="#b9c0c7" />
            </svg>
          </button>
        </div>
        <Drawing />
      </main>
    </div>
  );
}
